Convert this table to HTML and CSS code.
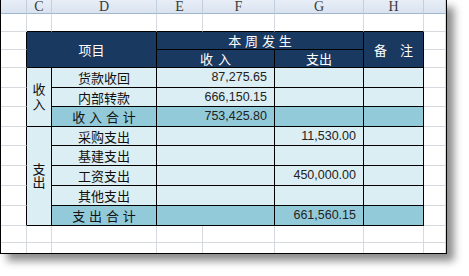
FILE: index.html
```html
<!DOCTYPE html>
<html lang="zh">
<head>
<meta charset="utf-8">
<title>本周发生</title>
<link rel="stylesheet" href="styles.css">
</head>
<body>
<div class="frame">
  <div class="sheet">
    <!-- table cells (explicitly placed) -->
    <div class="t navy cCD r3-5">项目</div>
    <div class="t navy cEG r3 sp">本 周 发 生</div>
    <div class="t navy cH r3-5">备　注</div>
    <div class="t navy cEF r4 sp2">收 入</div>
    <div class="t navy cG r4">支出</div>

    <div class="t lt cC r5-8"><span class="vt">收入</span></div>
    <div class="t lt cD r5">货款收回</div>
    <div class="t lt num cEF r5">87,275.65</div>
    <div class="t lt cG r5"></div>
    <div class="t lt cH r5"></div>

    <div class="t lt cD r6">内部转款</div>
    <div class="t lt num cEF r6">666,150.15</div>
    <div class="t lt cG r6"></div>
    <div class="t lt cH r6"></div>

    <div class="t tot cD r7 sp">收 入 合 计</div>
    <div class="t tot num cEF r7">753,425.80</div>
    <div class="t tot cG r7"></div>
    <div class="t tot cH r7"></div>

    <div class="t lt cC r8-13"><span class="vt vt2">支出</span></div>
    <div class="t lt cD r8">采购支出</div>
    <div class="t lt num cEF r8"></div>
    <div class="t lt num cG r8">11,530.00</div>
    <div class="t lt cH r8"></div>

    <div class="t lt cD r9">基建支出</div>
    <div class="t lt num cEF r9"></div>
    <div class="t lt num cG r9"></div>
    <div class="t lt cH r9"></div>

    <div class="t lt cD r10">工资支出</div>
    <div class="t lt num cEF r10"></div>
    <div class="t lt num cG r10">450,000.00</div>
    <div class="t lt cH r10"></div>

    <div class="t lt cD r11">其他支出</div>
    <div class="t lt num cEF r11"></div>
    <div class="t lt num cG r11"></div>
    <div class="t lt cH r11"></div>

    <div class="t tot cD r12 sp">支 出 合 计</div>
    <div class="t tot num cEF r12"></div>
    <div class="t tot num cG r12">661,560.15</div>
    <div class="t tot cH r12"></div>

    <!-- row 1: column headers -->
    <div class="ch"></div>
    <div class="ch">C</div>
    <div class="ch">D</div>
    <div class="ch">E</div>
    <div class="ch">F</div>
    <div class="ch">G</div>
    <div class="ch">H</div>
    <div class="ch"></div>

    <!-- row 2 -->
    <div class="g"></div>
    <div class="g above"></div>
    <div class="g above"></div>
    <div class="g above"></div>
    <div class="g above"></div>
    <div class="g above"></div>
    <div class="g above"></div>
    <div class="g"></div>

    <!-- rows 3-12: side cells -->
    <div class="g left"></div><div class="g"></div>
    <div class="g left"></div><div class="g"></div>
    <div class="g left"></div><div class="g"></div>
    <div class="g left"></div><div class="g"></div>
    <div class="g left"></div><div class="g"></div>
    <div class="g left"></div><div class="g"></div>
    <div class="g left"></div><div class="g"></div>
    <div class="g left"></div><div class="g"></div>
    <div class="g left"></div><div class="g"></div>
    <div class="g left"></div><div class="g"></div>

    <!-- row 13 -->
    <div class="g"></div><div class="g"></div><div class="g"></div><div class="g"></div>
    <div class="g"></div><div class="g"></div><div class="g"></div><div class="g"></div>
    <!-- row 14 -->
    <div class="g last"></div><div class="g last"></div><div class="g last"></div><div class="g last"></div>
    <div class="g last"></div><div class="g last"></div><div class="g last"></div><div class="g last"></div>
  </div>
</div>
</body>
</html>
```

FILE: styles.css
```css
* {
  box-sizing: border-box;
  margin: 0;
  padding: 0;
}

body {
  margin: 0;
  background: #ffffff;
  width: 469px;
  height: 276px;
  overflow: hidden;
}

.frame {
  width: 447px;
  height: 254px;
  border: 1px solid #000;
  border-top: none;
  background: #fff;
  box-shadow: 7px 7px 8px rgba(0, 0, 0, 0.45);
}

.sheet {
  display: grid;
  grid-template-columns: 26px 25px 105px 46px 72px 89px 60px 22px;
  grid-template-rows: 14px 18px 18px 18px 20px 19px 20px 19px 20px 20px 20px 20px 17px 10px;
}

/* column header */
.ch {
  background: linear-gradient(#e8eef7, #d9e3f0);
  border-right: 1px solid #c3cfdf;
  border-bottom: 1px solid #a3b6cc;
  font-family: "Liberation Serif", "DejaVu Serif", serif;
  font-size: 14px;
  line-height: 13px;
  color: #3a3a3a;
  text-align: center;
}

/* empty sheet cells */
.g {
  border-right: 1px solid #d6d9de;
  border-bottom: 1px solid #d6d9de;
}
.g.above { border-bottom-color: #000; }
.g.left { border-right-color: #000; }
.g.last { border-bottom: none; }

/* table cells */
.t {
  border-right: 1px solid #000;
  border-bottom: 1px solid #000;
  display: flex;
  align-items: center;
  justify-content: center;
  font-family: "Noto Sans CJK SC", "Liberation Sans", sans-serif;
  font-size: 13px;
  line-height: 13px;
  white-space: nowrap;
}

.navy { background: #1a3961; color: #fff; }
.lt { background: #dbeef3; color: #111; }
.tot { background: #93cad9; color: #111; }

.num {
  justify-content: flex-end;
  padding-right: 7px;
  font-family: "Liberation Sans", Arial, sans-serif;
  font-size: 12.5px;
  color: #222;
}

.sp { word-spacing: 1px; }
.sp2 { word-spacing: 2px; }

/* vertical labels */
.vt {
  writing-mode: vertical-rl;
  text-orientation: upright;
  letter-spacing: 2px;
  padding-top: 2px;
  line-height: 13px;
}
.vt2 {
  letter-spacing: 0;
  padding-top: 0;
}

/* placement */
.r3 { grid-row: 3; }
.r4 { grid-row: 4; }
.r5 { grid-row: 5; }
.r6 { grid-row: 6; }
.r7 { grid-row: 7; }
.r8 { grid-row: 8; }
.r9 { grid-row: 9; }
.r10 { grid-row: 10; }
.r11 { grid-row: 11; }
.r12 { grid-row: 12; }
.r3-5 { grid-row: 3 / 5; }
.r5-8 { grid-row: 5 / 8; }
.r8-13 { grid-row: 8 / 13; }

.cC { grid-column: 2; }
.cD { grid-column: 3; }
.cCD { grid-column: 2 / 4; }
.cEF { grid-column: 4 / 6; }
.cEG { grid-column: 4 / 7; }
.cG { grid-column: 6; }
.cH { grid-column: 7; }
```
